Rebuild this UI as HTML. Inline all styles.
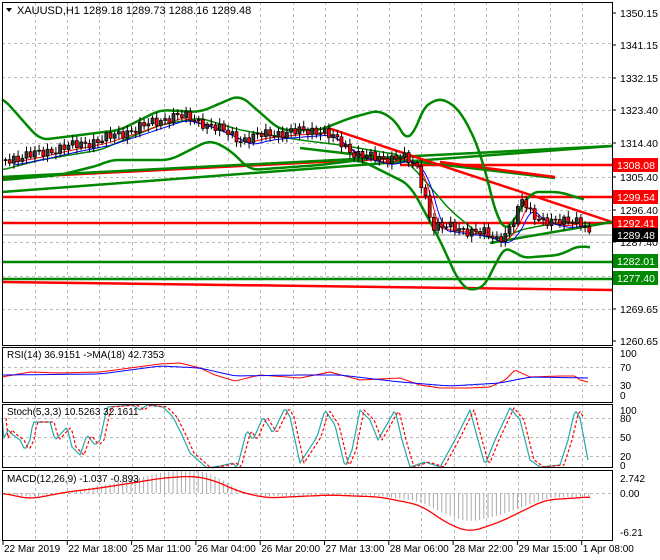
<!DOCTYPE html>
<html><head><meta charset="utf-8"><style>
html,body{margin:0;padding:0;background:#fff;}
svg{display:block;font-family:"Liberation Sans",sans-serif;}
</style></head><body>
<svg id="s" width="660" height="560" xmlns="http://www.w3.org/2000/svg"></svg>
<script>
const S=document.getElementById('s');let h='';
function I(p,x){if(x<=p[0][0])return p[0][1];for(let i=1;i<p.length;i++){if(x<=p[i][0]){const a=p[i-1],b=p[i];return a[1]+(b[1]-a[1])*(x-a[0])/(b[0]-a[0]);}}return p[p.length-1][1];}
function SM(p,x,r){let s=0,n=0;for(let d=-r;d<=r;d+=2){s+=I(p,x+d);n++;}return s/n;}
function poly(p,c,w,dash,r){let d='';for(let x=p[0][0];x<=p[p.length-1][0];x+=2)d+=x+','+(r?SM(p,x,r):I(p,x)).toFixed(1)+' ';return `<polyline points="${d}" fill="none" stroke="${c}" stroke-width="${w}" stroke-linejoin="round" ${dash?'stroke-dasharray="'+dash+'"':''}/>`;}
function L(x1,y1,x2,y2,c,w){return `<line x1="${x1}" y1="${y1}" x2="${x2}" y2="${y2}" stroke="${c}" stroke-width="${w}"/>`;}
const panels=[[2,345],[347,402],[404,467],[470,540]];
for(let x=35;x<612;x+=32.2){for(const p of panels)h+=`<line x1="${x.toFixed(0)}.5" y1="${p[0]}" x2="${x.toFixed(0)}.5" y2="${p[1]}" stroke="#bbb" stroke-dasharray="3,3"/>`;}
for(const y of [43,77,110,143,177,210,242,276,309])h+=`<line x1="2" y1="${y}.5" x2="612" y2="${y}.5" stroke="#bbb" stroke-dasharray="3,3"/>`;
for(const y of [367,385,418,437,456,493])h+=`<line x1="2" y1="${y}.5" x2="612" y2="${y}.5" stroke="#bbb" stroke-dasharray="3,3"/>`;
h+=L(2,197,612,197,'#f00',2.5)+L(2,223,612,223,'#f00',2.5)+L(2,235,612,235,'#bbb',1.5);
h+=L(2,262,612,262,'#080',2.5)+L(2,279,612,279,'#080',2.5)+L(2,282,612,290,'#f00',2.5);
h+=L(2,178,400,158,'#f00',2.5)+L(400,165,612,165,'#f00',2.5);
h+=L(2,177,612,146,'#080',2.5)+L(2,192,612,146,'#080',2.5);
h+=L(300,148,555,178,'#080',2.5)+L(440,162,555,177,'#f00',2.5);
h+=L(325,127,612,222,'#f00',2.5)+L(490,243,612,222,'#080',2.5);
const P=[[2,160],[30,155],[60,148],[100,140],[130,130],[160,120],[175,115],[200,122],[220,130],[240,140],[260,135],[290,132],[320,130],[335,140],[350,152],[380,160],[400,155],[415,168],[425,200],[430,225],[450,228],[480,232],[495,240],[505,232],[515,215],[520,200],[530,215],[545,220],[560,223],[575,220],[582,222],[588,235]];
const UP=[[2,97],[40,140],[80,135],[120,130],[160,110],[200,112],[240,95],[280,130],[320,130],[350,118],[380,110],[400,125],[410,150],[420,110],[440,97],[460,110],[480,150],[500,230],[510,228],[530,192],[560,192],[585,200]];
const LO=[[2,180],[60,175],[100,165],[110,160],[170,160],[210,140],[230,150],[250,170],[320,165],[360,160],[410,185],[440,240],[460,285],[475,292],[490,280],[500,250],[510,247],[520,258],[560,255],[580,245],[590,248]];
const MID=[[2,170],[40,160],[100,150],[160,125],[200,118],[240,130],[300,140],[340,145],[400,155],[420,175],[450,210],[480,235],[500,240],[520,230],[560,222],[590,224]];
h+=poly(UP,'#080',2.5,0,8)+poly(LO,'#080',2.5,0,8)+poly(MID,'#080',1.5,0,6);
const MA1=P.map(p=>[p[0]+8,p[1]+3]),MA2=P.map(p=>[p[0]+12,p[1]+5]);
h+=poly(MA1.filter(p=>p[0]<590),'#f00',1,0,4)+poly(MA2.filter(p=>p[0]<592),'#00f',1,0,6);
let prev=I(P,4);
for(let i=0;i<140;i++){const x=4+i*4.2;if(x>588)break;const n=Math.sin(i*2.3)*4+Math.sin(i*0.7)*2;const c=I(P,x)+n;const o=prev;prev=c;
const top=Math.min(o,c),bot=Math.max(o,c);const hi=top-2-Math.abs(Math.sin(i*1.7))*4,lo=bot+2+Math.abs(Math.cos(i*1.3))*4;
h+=L(x+1.5,hi,x+1.5,lo,'#000',1);h+=`<rect x="${x}" y="${top}" width="3" height="${Math.max(1,bot-top)}" fill="${c>o?'#f00':'#333'}" stroke="#000" stroke-width="0.7"/>`;}
h+=poly([[2,377],[30,372],[60,373],[100,372],[130,368],[160,364],[180,363],[200,368],[215,375],[235,381],[260,375],[300,378],[330,372],[360,380],[400,378],[420,385],[440,388],[470,388],[490,387],[505,380],[515,370],[530,377],[560,376],[575,376],[580,380],[588,382]],'#f00',1);
h+=poly([[2,375],[100,374],[160,366],[200,368],[235,376],[300,375],[340,375],[400,382],[450,386],[500,383],[530,377],[588,378]],'#00f',1,0,6);
const ST=[[2,418],[3,440],[8,430],[13,435],[20,440],[25,450],[30,440],[33,422],[50,422],[55,440],[67,427],[72,447],[80,455],[87,435],[95,445],[100,440],[107,407],[133,405],[140,410],[147,405],[163,407],[173,417],[182,435],[190,453],[207,468],[220,466],[233,463],[237,468],[247,430],[253,440],[263,417],[273,433],[285,408],[290,417],[300,463],[317,437],[325,410],[335,425],[345,467],[352,450],[360,410],[370,420],[378,440],[395,410],[402,440],[410,467],[425,462],[440,467],[455,440],[470,410],[478,440],[485,465],[495,440],[510,408],[520,420],[530,460],[540,467],[560,465],[568,440],[575,410],[580,418],[588,460]];
h+=poly(ST,'#2aa',1.2);
h+=poly(ST.map(p=>[p[0]+4,p[1]]).filter(p=>p[0]<588),'#f00',1.2,'3,2');
const MS=[[2,493],[30,499],[67,492],[100,488],[163,478],[193,476],[213,480],[240,492],[267,498],[330,495],[380,497],[420,505],[450,525],[470,532],[500,522],[545,500],[590,497]];
for(let x=4;x<590;x+=4.2){const v=SM(MS,x,10)-493;const hv=v<0?v*1.4:v*0.75;h+=L(x+1,493,x+1,493+hv,'#aaa',1);}
h+=poly(MS,'#f00',1.3,0,10);
for(const p of panels)h+=`<rect x="2.5" y="${p[0]+.5}" width="610" height="${p[1]-p[0]}" fill="none" stroke="#000"/>`;
const T=(x,y,t,s,c)=>`<text x="${x}" y="${y}" font-size="${s||11}" fill="${c||'#000'}">${t}</text>`;
for(const [y,t] of [[17,'1350.15'],[49,'1341.15'],[82,'1332.15'],[114,'1323.40'],[147,'1314.40'],[181,'1305.40'],[214,'1296.40'],[246,'1287.40'],[313,'1269.65'],[345,'1260.65']])h+=L(612,y-4,616,y-4,'#000',1)+T(620,y,t,10.5);
const box=(y,t,c)=>`<rect x="613" y="${y-7}" width="45" height="14" fill="${c}"/>`+T(617,y+4,t,10.5,'#fff');
h+=box(165,'1308.08','#f00')+box(197,'1299.54','#f00')+box(223,'1292.41','#f00')+box(235,'1289.48','#000')+box(261,'1282.01','#080')+box(278,'1277.40','#080');
for(const [y,t] of [[357,'100'],[371,'70'],[389,'30'],[399,'0'],[414,'100'],[422,'80'],[441,'50'],[460,'20'],[469,'0'],[482,'2.742'],[497,'0.00'],[536,'-6.21']])h+=T(620,y,t,10);
const TL=['22 Mar 2019','22 Mar 18:00','25 Mar 11:00','26 Mar 04:00','26 Mar 20:00','27 Mar 13:00','28 Mar 06:00','28 Mar 22:00','29 Mar 15:00','1 Apr 08:00'];
TL.forEach((t,i)=>{const x=3+i*64.3;h+=L(x,540,x,545,'#000',1)+T(x+1,552,t,10);});
h+=`<path d="M6 8 L12 8 L9 12 Z" fill="#000"/>`+T(17,14,'XAUUSD,H1  1289.18 1289.73 1288.16 1289.48',11);
h+=T(7,358,'RSI(14) 36.9151  -&gt;MA(18) 42.7353',10)+T(7,415,'Stoch(5,3,3) 10.5263 32.1611',10)+T(7,482,'MACD(12,26,9) -1.037 -0.893',10);
S.innerHTML=h;
</script>
</body></html>
